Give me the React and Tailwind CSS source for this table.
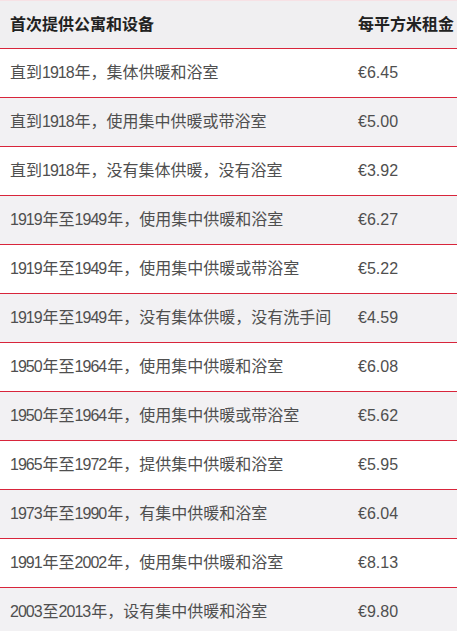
const rows = [
  ["直到1918年，集体供暖和浴室", "€6.45"],
  ["直到1918年，使用集中供暖或带浴室", "€5.00"],
  ["直到1918年，没有集体供暖，没有浴室", "€3.92"],
  ["1919年至1949年，使用集中供暖和浴室", "€6.27"],
  ["1919年至1949年，使用集中供暖或带浴室", "€5.22"],
  ["1919年至1949年，没有集体供暖，没有洗手间", "€4.59"],
  ["1950年至1964年，使用集中供暖和浴室", "€6.08"],
  ["1950年至1964年，使用集中供暖或带浴室", "€5.62"],
  ["1965年至1972年，提供集中供暖和浴室", "€5.95"],
  ["1973年至1990年，有集中供暖和浴室", "€6.04"],
  ["1991年至2002年，使用集中供暖和浴室", "€8.13"],
  ["2003至2013年，设有集中供暖和浴室", "€9.80"],
];

// digits in the source are narrower than our fallback font, squeeze them a bit
function Label({ text }) {
  const parts = text.split(/(\d+)/);
  return (
    <span>
      {parts.map((p, i) =>
        /^\d+$/.test(p) ? (
          <span key={i} className="tracking-[-1px] mr-[1px]">
            {p}
          </span>
        ) : (
          <span key={i}>{p}</span>
        )
      )}
    </span>
  );
}

export default function App() {
  return (
    <div
      className="w-[457px] h-[631px] overflow-hidden bg-white"
      style={{ fontFamily: '"Liberation Sans", "Noto Sans CJK SC", sans-serif' }}
    >
      {/* Header */}
      <div className="grid grid-cols-[348px_1fr] items-center h-[49px] pl-[10px] bg-[#f0eff1] border-t border-[#f7e1e5] border-b-[1.5px] border-b-[#d8253b] text-[16px] font-bold text-[#222]">
        <span>首次提供公寓和设备</span>
        <span className="whitespace-nowrap">每平方米租金</span>
      </div>

      {/* Rows */}
      {rows.map(([label, price], i) => (
        <div
          key={i}
          className={`grid grid-cols-[348px_1fr] items-center h-[49px] pl-[10px] border-b-[1.5px] border-[#d8253b] text-[16px] text-[#4f4f4f] ${
            i % 2 === 0 ? "bg-white" : "bg-[#f2f1f3]"
          }`}
        >
          <Label text={label} />
          <span>{price}</span>
        </div>
      ))}
    </div>
  );
}
